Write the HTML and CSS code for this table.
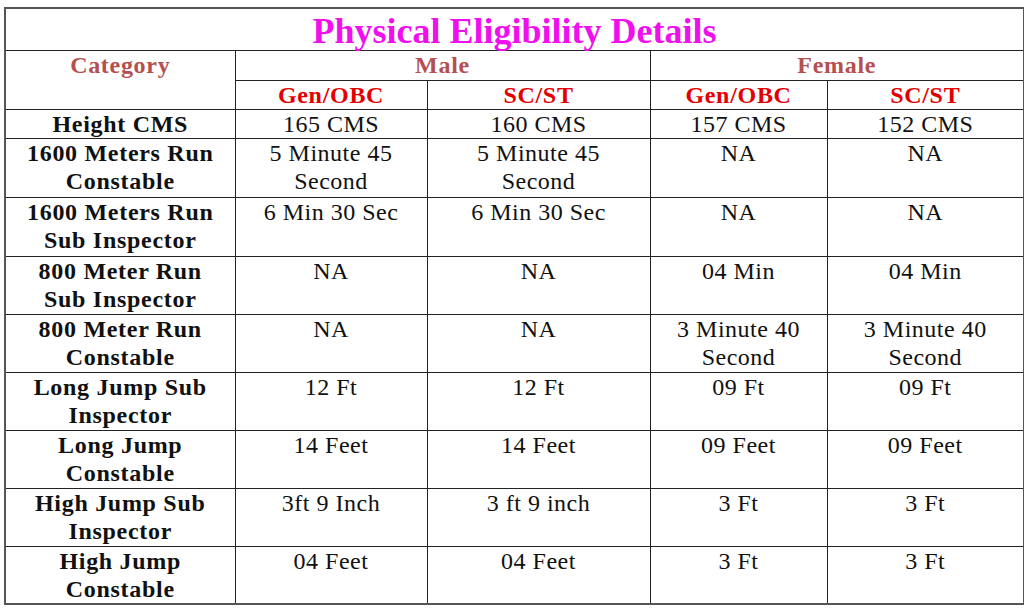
FILE: index.html
```html
<!DOCTYPE html>
<html>
<head>
<meta charset="utf-8">
<link rel="stylesheet" href="styles.css">
</head>
<body>
<table class="elig">
  <colgroup>
    <col class="c1"><col class="c2"><col class="c3"><col class="c4"><col class="c5">
  </colgroup>
  <tr class="r-title"><th colspan="5" class="title">Physical Eligibility Details</th></tr>
  <tr class="r-head"><th rowspan="2" class="cat">Category</th><th colspan="2" class="sex">Male</th><th colspan="2" class="sex">Female</th></tr>
  <tr class="r-sub"><th class="sub">Gen/OBC</th><th class="sub">SC/ST</th><th class="sub">Gen/OBC</th><th class="sub">SC/ST</th></tr>
  <tr class="r-one"><th>Height CMS</th><td>165 CMS</td><td>160 CMS</td><td>157 CMS</td><td>152 CMS</td></tr>
  <tr class="r-two r-tall"><th>1600 Meters Run<br>Constable</th><td>5 Minute 45<br>Second</td><td>5 Minute 45<br>Second</td><td>NA</td><td>NA</td></tr>
  <tr class="r-two r-tall"><th>1600 Meters Run<br>Sub Inspector</th><td>6 Min 30 Sec</td><td>6 Min 30 Sec</td><td>NA</td><td>NA</td></tr>
  <tr class="r-two"><th>800 Meter Run<br>Sub Inspector</th><td>NA</td><td>NA</td><td>04 Min</td><td>04 Min</td></tr>
  <tr class="r-two"><th>800 Meter Run<br>Constable</th><td>NA</td><td>NA</td><td>3 Minute 40<br>Second</td><td>3 Minute 40<br>Second</td></tr>
  <tr class="r-two"><th>Long Jump Sub<br>Inspector</th><td>12 Ft</td><td>12 Ft</td><td>09 Ft</td><td>09 Ft</td></tr>
  <tr class="r-two"><th>Long Jump<br>Constable</th><td>14 Feet</td><td>14 Feet</td><td>09 Feet</td><td>09 Feet</td></tr>
  <tr class="r-two"><th>High Jump Sub<br>Inspector</th><td>3ft 9 Inch</td><td>3 ft 9 inch</td><td>3 Ft</td><td>3 Ft</td></tr>
  <tr class="r-two"><th>High Jump<br>Constable</th><td>04 Feet</td><td>04 Feet</td><td>3 Ft</td><td>3 Ft</td></tr>
</table>
</body>
</html>
```
FILE: styles.css
```css
html, body {
  margin: 0;
  padding: 0;
  background: #fff;
}
body {
  padding: 7px 0 0 4px;
  font-family: "Liberation Serif", "Times New Roman", serif;
  color: #111;
}
.elig {
  border-collapse: collapse;
  table-layout: fixed;
  width: 1019px;
  border: 2px solid #555;
}
.c1 { width: 230px; }
.c2 { width: 192px; }
.c3 { width: 223px; }
.c4 { width: 177px; }
.c5 { width: 197px; }
.elig th, .elig td {
  border: 1px solid #222;
  padding: 0;
  text-align: center;
  vertical-align: top;
  font-size: 24px;
  line-height: 28px;
  white-space: nowrap;
}
.elig th { font-weight: bold; letter-spacing: 0.7px; }
.elig td { font-weight: normal; letter-spacing: 0.5px; }
.r-title { height: 42px; }
.r-head { height: 30px; }
.r-sub { height: 29px; }
.r-one { height: 28px; }
.r-two { height: 58px; }
.r-tall { height: 59px; }
.elig .title {
  color: #f010ee;
  font-size: 36px;
  line-height: 36px;
  letter-spacing: 0;
  vertical-align: top;
  padding-top: 4px;
}
.elig .cat, .elig .sex {
  color: #b5504f;
}
.elig .sub { color: #e40000; }
```
